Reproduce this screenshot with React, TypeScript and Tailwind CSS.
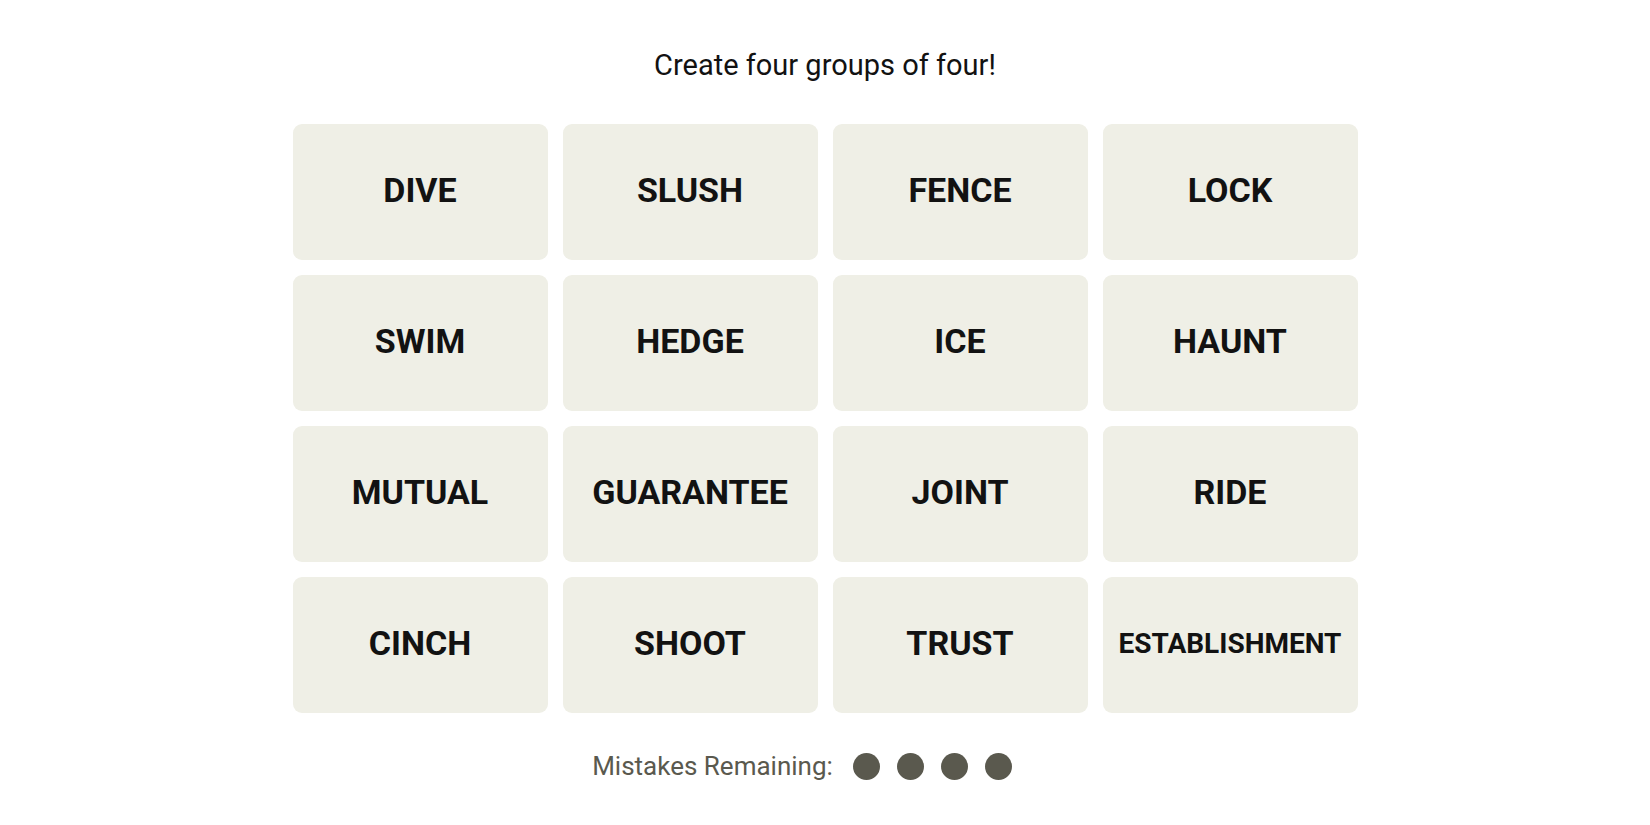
import React from 'react';

const WORDS = [
    'DIVE', 'SLUSH', 'FENCE', 'LOCK',
    'SWIM', 'HEDGE', 'ICE', 'HAUNT',
    'MUTUAL', 'GUARANTEE', 'JOINT', 'RIDE',
    'CINCH', 'SHOOT', 'TRUST', 'ESTABLISHMENT',
];

export default function App() {
    return (
        <div className="min-h-screen bg-white flex flex-col items-center pt-[49px] font-['Roboto',sans-serif]">
            <h2 className="text-[29px] leading-[32px] text-[#121212] font-normal">Create four groups of four!</h2>

            {/* Word grid */}
            <div className="mt-[43px] grid grid-cols-[repeat(4,255px)] auto-rows-[136px] gap-[15px]">
                {WORDS.map((w) => (
                    <button
                        key={w}
                        className={`rounded-[9px] bg-[#efefe6] text-[#121212] font-bold flex items-center justify-center pb-[3px] ${w.length > 10 ? 'text-[28px]' : 'text-[34px]'}`}
                    >
                        {w}
                    </button>
                ))}
            </div>

            {/* Mistakes */}
            <div className="mt-[37px] flex items-center h-[32px] pr-[46px]">
                <span className="text-[26px] text-[#5a594e] mr-[20px]">Mistakes Remaining:</span>
                <div className="flex gap-[17px]">
                    <span className="w-[27px] h-[27px] rounded-full bg-[#5a594e]" />
                    <span className="w-[27px] h-[27px] rounded-full bg-[#5a594e]" />
                    <span className="w-[27px] h-[27px] rounded-full bg-[#5a594e]" />
                    <span className="w-[27px] h-[27px] rounded-full bg-[#5a594e]" />
                </div>
            </div>
        </div>
    );
}
